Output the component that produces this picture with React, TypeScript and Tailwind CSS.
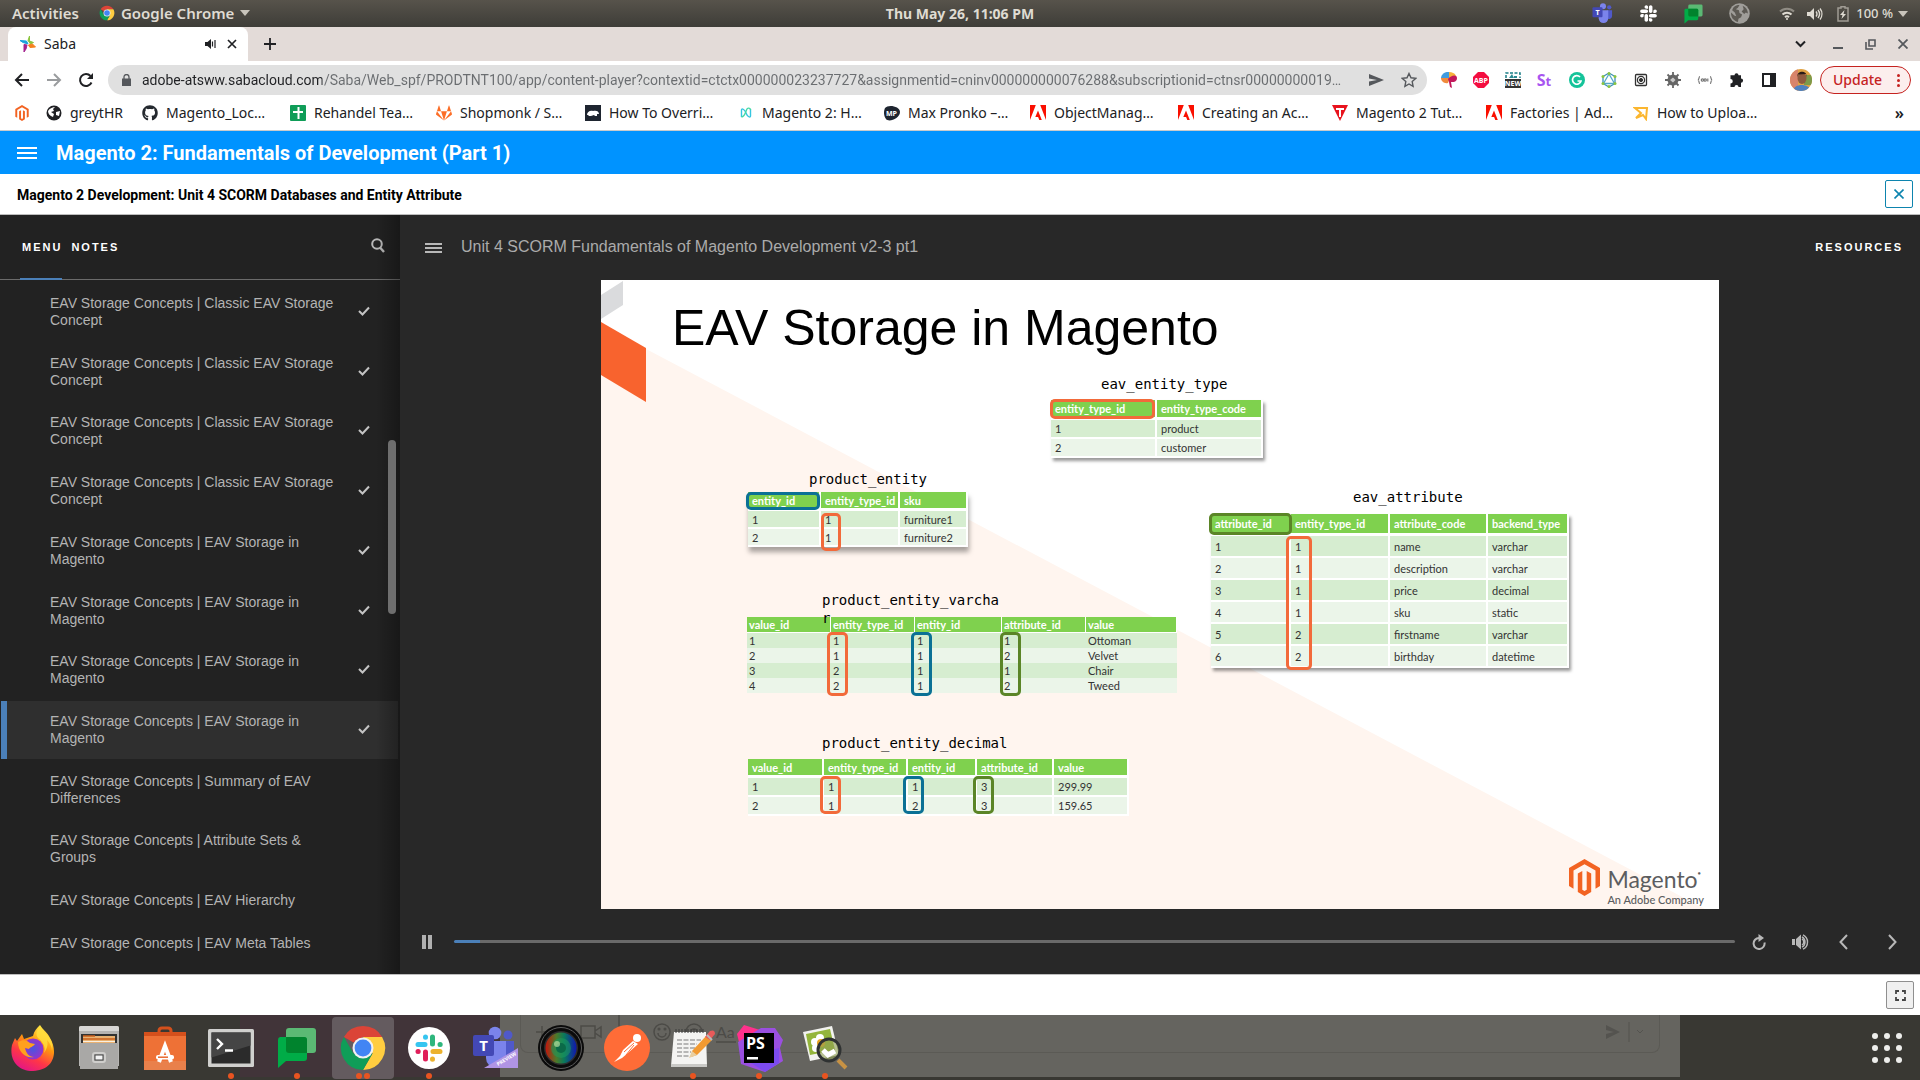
import type { ReactNode } from 'react';
import { FaGithub, FaGitlab, FaSlack } from 'react-icons/fa';

/* ---------- shared drawings ---------- */

function MagentoMark({ className }: { className: string }) {
  return (
    <svg viewBox="0 0 31 37" className={className} fill="#f26322" aria-hidden="true">
      <path d="M15.5 0 31 9v18l-4.5 2.7V11.6L15.5 5.200 4.500 11.600V29.700L0 27V9Z" />
      <path d="m13.300 12-4.500 2.600V33l6.700 4 6.700-4V14.600L17.700 12v18.800l-2.200 1.300-2.200-1.300Z" />
    </svg>
  );
}

function ChromeMark({ className }: { className: string }) {
  return (
    <svg viewBox="0 0 48 48" className={className} aria-hidden="true">
      <path d="M24 2A22 22 0 0 1 43.100 13H24L14.500 18.500 4.900 13A22 22 0 0 1 24 2Z" fill="#db4437" />
      <path d="M43.100 13A22 22 0 0 1 24 46L33.500 29.500 24 13Z" fill="#ffcd40" />
      <path d="M4.900 13A22 22 0 0 0 24 46L33.500 29.500H14.500Z" fill="#0f9d58" />
      <circle cx="24" cy="24" r="10.500" fill="#f1f1f1" />
      <circle cx="24" cy="24" r="8.400" fill="#4285f4" />
    </svg>
  );
}

function ChatMark({ className }: { className: string }) {
  return (
    <svg viewBox="0 0 40 42" className={className} aria-hidden="true">
      <rect x="9" y="1" width="30" height="25" rx="3" fill="#5bb974" />
      <path d="M3 10h24a3 3 0 0 1 3 3v18a3 3 0 0 1-3 3H9l-8 7V13a3 3 0 0 1 2-3Z" fill="#00ac47" />
      <path d="M9 10h18a3 3 0 0 1 3 3v13H12a3 3 0 0 1-3-3Z" fill="#00832d" />
    </svg>
  );
}

function TeamsMark({ className, preview }: { className: string; preview?: boolean }) {
  return (
    <svg viewBox="0 0 46 44" className={className} aria-hidden="true">
      <circle cx="36" cy="9" r="4.500" fill="#5059c9" />
      <path d="M32 15h10v13a6 6 0 0 1-10 4Z" fill="#5059c9" />
      <circle cx="23" cy="7" r="6.300" fill="#7b83eb" />
      <path d="M14 15h20v17a10 10 0 0 1-20 0Z" fill="#7b83eb" />
      <rect x="1" y="9" width="21" height="21" rx="2" fill="#4348b5" />
      <text x="11.500" y="25" textAnchor="middle" fontFamily="Open Sans, sans-serif" fontWeight="700" fontSize="15" fill="#fff">T</text>
      {preview && (
        <g>
          <path d="M46 22v20H12Z" fill="#b094e4" />
          <text x="26" y="40" transform="rotate(-31 26 40)" fontFamily="Open Sans, sans-serif" fontWeight="700" fontSize="5" fill="#fff">PREVIEW</text>
        </g>
      )}
    </svg>
  );
}

function Globe({ className }: { className: string }) {
  return (
    <svg viewBox="0 0 20 20" className={className} aria-hidden="true">
      <circle cx="10" cy="10" r="9.800" fill="#9f9d99" />
      <path d="M4 4.500C6 2.500 8 2 10 2L8.500 4.500 6.500 6l3 1 .5 2.500 2.500 1.500-1 2.500L9 15l-.5 3C4 17 1.500 13 2 9l3 3 2 .5L5.500 9 3 7Zm9-2c3 1.300 5 4 5 7.500l-2-1-1.500 1.500L12 8l2-2Z" fill="#5d5a54" />
    </svg>
  );
}

function AdobeMark() {
  return (
    <svg viewBox="0 0 16 16" className="size-4 shrink-0" aria-hidden="true">
      <path d="M0 0h5.800L0 15ZM10.200 0H16v15ZM8 5.500 11.800 15H9.300l-1.200-3H5.300Z" fill="#fa0f00" />
    </svg>
  );
}

/* ---------- desktop top bar ---------- */

function TopBar() {
  return (
    <header className="grid h-[27px] grid-cols-[1fr_auto_1fr] items-center bg-linear-to-b from-[#57534b] to-[#3e3d38] px-3 text-sm text-[#dfdbd2]">
      <div className="flex items-center gap-5 text-[15px] font-semibold">
        <button>Activities</button>
        <button className="flex items-center gap-[6px]">
          <ChromeMark className="size-4" />
          Google Chrome
          <svg viewBox="0 0 10 6" className="h-[6px] w-[10px]" aria-hidden="true"><path d="M0 0h10L5 6Z" fill="#c8c4bb" /></svg>
        </button>
      </div>
      <button className="font-bold">Thu May 26, 11:06 PM</button>
      <div className="flex items-center justify-end">
        <TeamsMark className="mr-[25px] h-[21px] w-[22px]" />
        <FaSlack className="mr-[25px] size-[19px] text-white" />
        <ChatMark className="mr-[25px] h-5 w-[21px]" />
        <Globe className="mr-[29px] size-[21px]" />
        <svg viewBox="0 0 16 14" className="mr-3 h-[14px] w-4" fill="none" stroke="#dfdbd2" strokeWidth="2" aria-hidden="true">
          <path d="M1 4.500a10 10 0 0 1 14 0" opacity=".45" />
          <path d="M3.500 7.500a6.500 6.500 0 0 1 9 0M6 10.200a3 3 0 0 1 4 0" />
          <circle cx="8" cy="12" r="1" fill="#dfdbd2" stroke="none" />
        </svg>
        <svg viewBox="0 0 16 14" className="mr-[14px] h-[14px] w-4" fill="none" stroke="#dfdbd2" strokeWidth="1.400" aria-hidden="true">
          <path d="M0 5h3l4-4v12L3 9H0Z" fill="#dfdbd2" stroke="none" />
          <path d="M9 4.500a4 4 0 0 1 0 5M11 3a6.500 6.500 0 0 1 0 8M13 1.500a9 9 0 0 1 0 11" />
        </svg>
        <svg viewBox="0 0 12 16" className="mr-[7px] h-4 w-3" fill="none" aria-hidden="true">
          <path d="M4 2V.8h4V2h3v13H1V2Z" stroke="#a09c94" strokeWidth="1.500" />
          <path d="M7.500 4 3 9h2.500L4.500 13 9 8H6.500Z" fill="#dfdbd2" />
        </svg>
        <span className="text-[13px] font-medium">100 %</span>
        <svg viewBox="0 0 10 6" className="ml-[5px] h-[6px] w-[10px]" aria-hidden="true"><path d="M0 0h10L5 6Z" fill="#c8c4bb" /></svg>
      </div>
    </header>
  );
}

/* ---------- browser chrome ---------- */

function TabStrip() {
  return (
    <div className="flex h-[34px] items-center bg-[#e3dbd8] pr-3 pl-2 text-[#202124]">
      <div className="flex h-full w-60 items-center rounded-t-lg bg-white pr-[11px] pl-3 text-sm">
        <svg viewBox="0 0 16 16" className="size-4" aria-hidden="true">
          <path d="M0 4.500 6.500 5 8 8 3 6.500Z" fill="#1ba3dd" stroke="#1ba3dd" />
          <path d="M9.500 0v5l4 1.500L10.500 8 8 4.500Z" fill="#8bc53f" stroke="#8bc53f" />
          <path d="m15.500 11-5.500.5-1.500-2.500 4-1Z" fill="#f58220" stroke="#f58220" />
          <path d="M4 16V8.500L7 9l-1 4Z" fill="#a3238e" stroke="#a3238e" />
        </svg>
        <span className="ml-2 flex-1">Saba</span>
        <svg viewBox="0 0 12 12" className="size-3" aria-hidden="true">
          <path d="M0 4h2.500L6 1v10L2.500 8H0Z" fill="#202124" />
          <path d="M7.500 3.500v5M10 2v8" stroke="#202124" strokeWidth="1.200" />
        </svg>
        <button aria-label="Close tab" className="ml-[10px]">
          <svg viewBox="0 0 10 10" className="size-[10px]" stroke="#202124" strokeWidth="1.700" aria-hidden="true"><path d="m1 1 8 8M9 1 1 9" /></svg>
        </button>
      </div>
      <button aria-label="New tab" className="ml-4">
        <svg viewBox="0 0 12 12" className="size-3" stroke="#202124" strokeWidth="1.800" aria-hidden="true"><path d="M6 0v12M0 6h12" /></svg>
      </button>
      <div className="ml-auto flex items-center gap-[22px] text-[#55585c]">
        <button aria-label="Search tabs" className="mr-[5px]">
          <svg viewBox="0 0 11 8" className="h-2 w-[11px]" fill="none" stroke="#202124" strokeWidth="2" aria-hidden="true"><path d="m1 1.500 4.500 4.500L10 1.500" /></svg>
        </button>
        <button aria-label="Minimise" className="pt-2"><span className="block h-[2px] w-[10px] bg-[#55585c]" /></button>
        <button aria-label="Restore">
          <svg viewBox="0 0 11 11" className="size-[11px]" fill="none" stroke="currentColor" strokeWidth="1.600" aria-hidden="true"><path d="M4 1h6v6H4ZM1 3v7h7" /></svg>
        </button>
        <button aria-label="Close window">
          <svg viewBox="0 0 10 10" className="size-[10px]" stroke="currentColor" strokeWidth="1.800" aria-hidden="true"><path d="m.5.5 9 9M9.500.5l-9 9" /></svg>
        </button>
      </div>
    </div>
  );
}

const extensions: { name: string; icon: ReactNode }[] = [
  { name: 'Colour picker', icon: <g><path d="M0 6a7 6 0 0 1 8-6v6Z" fill="#3f9be0" /><path d="M8 0c3 0 6 1 7 4l-7 3Z" fill="#f6b13c" /><path d="M0 6h9l-2 5C3 12 0 9 0 6Z" fill="#f08a3c" /><path d="M7 7c3-4 9-5 9-1 0 5-6 4-6 4l1 6-2-1-1-5Z" fill="#c2185b" /></g> },
  { name: 'Adblock Plus', icon: <g><path d="M5 0h6l5 5v6l-5 5H5l-5-5V5Z" fill="#f40d40" /><text x="8" y="10.800" textAnchor="middle" fontSize="7" fontWeight="700" fontFamily="Open Sans, sans-serif" fill="#fff">ABP</text></g> },
  { name: 'Screenshot', icon: <g><path d="M1 6V1h14v5" fill="none" stroke="#1a7d86" strokeWidth="1.500" strokeDasharray="3 1.500" /><path d="M4 6 7 2l2 4Zm5-2h3v2H9Z" fill="#2a8b93" /><rect y="7" width="16" height="9" fill="#333" /><text x="8" y="14.200" textAnchor="middle" fontSize="7" fontWeight="700" fontFamily="Open Sans, sans-serif" fill="#fff">NEW</text></g> },
  { name: 'Stylus', icon: <text x="7" y="14" textAnchor="middle" fontSize="16" fontWeight="700" fontFamily="Open Sans, sans-serif" fill="#a855f0">S<tspan fontSize="13">t</tspan></text> },
  { name: 'Grammarly', icon: <g><circle cx="8" cy="8" r="8" fill="#15c39a" /><path d="M11 5a4.300 4.300 0 1 0 1 4H8.500" fill="none" stroke="#fff" strokeWidth="1.700" /></g> },
  { name: 'GraphQL', icon: <g fill="none" strokeWidth="1.300"><path d="m8 1 6 3.500v7L8 15l-6-3.500v-7Z" stroke="#3d8fb8" /><path d="m8 2 5.500 9.500h-11Z" stroke="#55a9c9" /><g fill="#8cc63f" stroke="none"><circle cx="8" cy="1.500" r="1.500" /><circle cx="14" cy="4.500" r="1.500" /><circle cx="14" cy="11.500" r="1.500" /><circle cx="2" cy="11.500" r="1.500" /><circle cx="2" cy="4.500" r="1.500" /><circle cx="8" cy="14.500" r="1.500" /></g></g> },
  { name: 'Recorder', icon: <g fill="none" stroke="#333"><rect x="2.500" y="2.500" width="11" height="11" rx="1" strokeWidth="1.300" /><circle cx="8" cy="8" r="3.600" strokeWidth="1.300" /><circle cx="8" cy="8" r="1.600" fill="#333" /></g> },
  { name: 'Debugger', icon: <g><circle cx="8" cy="8" r="5.500" fill="#666" /><path d="M8 0v16M0 8h16M2.500 2.500l11 11M13.500 2.500l-11 11" stroke="#666" strokeWidth="1.800" /><path d="m5 8 3-2.500L10.500 8 8 10.500Z" fill="#c9c9c9" /></g> },
  { name: 'JSON viewer', icon: <g fill="none" stroke="#777" strokeWidth="1.200"><path d="M3 4.500C1.500 4.500 2.500 8 .8 8c1.700 0 .7 3.500 2.200 3.500M13 4.500c1.500 0 .5 3.500 2.200 3.500-1.700 0-.7 3.500-2.200 3.500" /><circle cx="5.500" cy="8" r="1.200" /><circle cx="8.200" cy="8" r="1.200" /><path d="M10.800 6.500v3" /></g> },
  { name: 'Extensions', icon: <path d="M5.500 3.200a2 2 0 0 1 4 0H12V6.500a2 2 0 0 1 0 4.200V15H9.500a2 2 0 0 0-4 0H1.500v-3.500a2 2 0 0 0 0-4.500V3.200ZM12 6.700a2 2 0 1 1 0 4Z" fill="#202124" /> },
  { name: 'Side panel', icon: <path d="M1 1h14v14H1Zm2 2v10h6V3Z" fillRule="evenodd" fill="#202124" /> },
];

const pageUrl =
  'adobe-atsww.sabacloud.com/Saba/Web_spf/PRODTNT100/app/content-player?contextid=ctctx000000023237727&assignmentid=cninv000000000076288&subscriptionid=ctnsr00000000019…';

function Toolbar() {
  return (
    <div className="flex h-[38px] items-center bg-white pr-[9px] pl-[14px]">
      <div className="flex w-[94px] items-center gap-4">
        <button aria-label="Back"><svg viewBox="0 0 16 14" className="h-[14px] w-4" fill="none" stroke="#202124" strokeWidth="2" aria-hidden="true"><path d="M15 7H2M8 1 2 7l6 6" /></svg></button>
        <button aria-label="Forward"><svg viewBox="0 0 16 14" className="h-[14px] w-4" fill="none" stroke="#9a9c9e" strokeWidth="2" aria-hidden="true"><path d="M1 7h13M8 1l6 6-6 6" /></svg></button>
        <button aria-label="Reload"><svg viewBox="0 0 16 16" className="size-4" fill="none" stroke="#202124" strokeWidth="2" aria-hidden="true"><path d="M13.500 10.500A6 6 0 1 1 12.500 4" /><path d="M15 1v6H9Z" fill="#202124" stroke="none" /></svg></button>
      </div>
      <label className="flex h-[30px] min-w-0 flex-1 items-center rounded-full bg-[#e0e0e0] pr-[10px] pl-[14px]">
        <svg viewBox="0 0 9 12" className="h-3 w-[9px] shrink-0" aria-hidden="true"><path d="M0 4.500h9V12H0Z" fill="#55585c" /><path d="M2 5V3a2.500 2.500 0 0 1 5 0v2" fill="none" stroke="#55585c" strokeWidth="1.300" /></svg>
        <span className="sr-only">Address</span>
        <input
          type="text"
          defaultValue={pageUrl}
          className="ml-[11px] min-w-0 flex-1 bg-linear-to-r from-[#202124] from-[180px] to-[#6a6d70] to-[180px] bg-clip-text font-[Roboto,sans-serif] text-sm text-transparent outline-none"
        />
        <button aria-label="Send" className="ml-3"><svg viewBox="0 0 15 12" className="h-3 w-[15px]" aria-hidden="true"><path d="M0 0l15 6L0 12V7.500L8 6 0 4.500Z" fill="#55585c" /></svg></button>
        <button aria-label="Bookmark" className="ml-[17px]"><svg viewBox="0 0 16 16" className="size-4" fill="none" stroke="#55585c" strokeWidth="1.400" aria-hidden="true"><path d="m8 1.500 2 4.300 4.700.6-3.500 3.200.9 4.700L8 12l-4.100 2.300.9-4.700L1.300 6.400 6 5.800Z" /></svg></button>
      </label>
      <div className="ml-[14px] flex items-center gap-4">
        {extensions.map((e) => (
          <button key={e.name} aria-label={e.name}><svg viewBox="0 0 16 16" className="size-4">{e.icon}</svg></button>
        ))}
      </div>
      <button aria-label="Profile" className="ml-[13px]">
        <svg viewBox="0 0 22 22" className="size-[22px]">
          <clipPath id="avatar"><circle cx="11" cy="11" r="11" /></clipPath>
          <g clipPath="url(#avatar)">
            <rect width="22" height="22" fill="#e0a243" />
            <path d="M0 0h8v22H0Z" fill="#d8846b" />
            <path d="M14 6h8v10h-8Z" fill="#7d9a4a" />
            <ellipse cx="12" cy="9" rx="4.500" ry="6" fill="#8f5a3f" />
            <path d="M7 8c0-7 10-7 10 0l-1-3-8 .5Z" fill="#2a1b18" />
            <path d="M3 22c1-8 16-8 18 0Z" fill="#4f81c0" />
          </g>
        </svg>
      </button>
      <button className="ml-2 flex h-7 w-[91px] items-center justify-between rounded-full border border-[#c5221f] bg-[#fceeed] pr-[10px] pl-3 text-sm font-medium text-[#c5221f]">
        Update
        <span className="flex flex-col gap-[2px]">
          <i className="size-[3px] rounded-full bg-[#c5221f]" /><i className="size-[3px] rounded-full bg-[#c5221f]" /><i className="size-[3px] rounded-full bg-[#c5221f]" />
        </span>
      </button>
    </div>
  );
}

const bookmarks: { width: string; label: string; icon: ReactNode }[] = [
  { width: 'w-8', label: '', icon: <MagentoMark className="h-4 w-4" /> },
  { width: 'w-24', label: 'greytHR', icon: <svg viewBox="0 0 16 16" className="size-4 shrink-0"><circle cx="8" cy="8" r="7.500" fill="#202124" /><path d="M2 6c2-3 5-4 7-4L7 4l1 2-3 1 3 2-1 3C4 11 2 9 2 6Zm8 1 4-1-1 5-3-1Z" fill="#fff" /></svg> },
  { width: 'w-[148px]', label: 'Magento_Loc…', icon: <FaGithub className="size-4 shrink-0 text-[#24292f]" /> },
  { width: 'w-[146px]', label: 'Rehandel Tea…', icon: <svg viewBox="0 0 16 16" className="size-4 shrink-0"><rect width="16" height="16" rx="1" fill="#0f9d58" /><path d="M8.500 2v12M3 7h10" stroke="#fff" strokeWidth="2" /></svg> },
  { width: 'w-[149px]', label: 'Shopmonk / S…', icon: <FaGitlab className="size-4 shrink-0 text-[#fc6d26]" /> },
  { width: 'w-[153px]', label: 'How To Overri…', icon: <svg viewBox="0 0 16 16" className="size-4 shrink-0"><rect width="16" height="16" fill="#1e2530" /><path d="M2 10c0-3 3-5 6-4 3-1 6 0 6 3h-2v2h-2l-1-1-3 1H4l-1-1Z" fill="#fff" /></svg> },
  { width: 'w-[146px]', label: 'Magento 2: H…', icon: <svg viewBox="0 0 16 16" className="size-4 shrink-0" fill="none" strokeWidth="1.400"><path d="M3.500 12V5c0-2 3-1 4.500 3s4.500 5 4.500 3V4" stroke="#35c6e0" /><path d="M3.500 12c2 0 4-4 5-7s4-2 4 0" stroke="#45d9a5" /></svg> },
  { width: 'w-[146px]', label: 'Max Pronko –…', icon: <svg viewBox="0 0 16 16" className="size-4 shrink-0"><path d="M1 3c3-4 15-2 15 4S5 18 2 14 0 5 1 3Z" fill="#1e2530" /><text x="7.500" y="10.500" textAnchor="middle" fontSize="7" fontWeight="700" fontFamily="Open Sans, sans-serif" fill="#fff">MP</text></svg> },
  { width: 'w-[148px]', label: 'ObjectManag…', icon: <AdobeMark /> },
  { width: 'w-[154px]', label: 'Creating an Ac…', icon: <AdobeMark /> },
  { width: 'w-[154px]', label: 'Magento 2 Tut…', icon: <svg viewBox="0 0 16 16" className="size-4 shrink-0"><path d="M0 0h16L8 16Z" fill="#e8131d" /><path d="M4 4h8M8 4v8" stroke="#fff" strokeWidth="2" /></svg> },
  { width: 'w-[147px]', label: 'Factories | Ad…', icon: <AdobeMark /> },
  { width: 'w-[150px]', label: 'How to Uploa…', icon: <svg viewBox="0 0 16 16" className="size-4 shrink-0" fill="none" stroke="#fbb62f" strokeWidth="2"><path d="M2 3h12l-1 11-3-4-7 3 5-5Z" /></svg> },
];

function BookmarkBar() {
  return (
    <nav aria-label="Bookmarks" className="flex h-8 items-center overflow-hidden border-b border-[#c9cbcd] bg-white pr-4 pb-[3px] pl-[14px] text-sm text-[#202124]">
      {bookmarks.map((b, i) => (
        <a key={i} href="#" aria-label={b.label || 'Magento'} className={`flex shrink-0 items-center gap-2 whitespace-nowrap ${b.width}`}>
          {b.icon}
          {b.label}
        </a>
      ))}
      <button className="ml-auto text-base leading-none font-semibold" aria-label="More bookmarks">»</button>
    </nav>
  );
}

/* ---------- course page ---------- */

const classic = 'EAV Storage Concepts | Classic EAV Storage Concept';
const inMagento = 'EAV Storage Concepts | EAV Storage in Magento';

const lessons: { title: string; done?: boolean; active?: boolean }[] = [
  { title: classic, done: true },
  { title: classic, done: true },
  { title: classic, done: true },
  { title: classic, done: true },
  { title: inMagento, done: true },
  { title: inMagento, done: true },
  { title: inMagento, done: true },
  { title: inMagento, done: true, active: true },
  { title: 'EAV Storage Concepts | Summary of EAV Differences' },
  { title: 'EAV Storage Concepts | Attribute Sets & Groups' },
  { title: 'EAV Storage Concepts | EAV Hierarchy' },
  { title: 'EAV Storage Concepts | EAV Meta Tables' },
];

function Sidebar() {
  return (
    <aside className="relative flex w-[400px] shrink-0 flex-col bg-[#222]">
      <div className="flex h-[65px] items-center border-b border-[#6b6b6b] pr-[15px] pl-5 text-white">
        <button className="relative flex h-full items-center pl-[2px] text-[11px] font-bold tracking-[2px]">
          MENU
          <span className="absolute inset-x-0 -bottom-px h-[2px] bg-[#4b80b9]" />
        </button>
        <button className="ml-[9px] text-[11px] font-bold tracking-[2px]">NOTES</button>
        <button aria-label="Search" className="mb-1 ml-auto">
          <svg viewBox="0 0 14 15" className="h-[15px] w-[14px]" fill="none" stroke="#b8b8b8" strokeWidth="2" aria-hidden="true"><circle cx="6" cy="6" r="4.800" /><path d="m9 9.500 4 4.500" strokeWidth="2.400" /></svg>
        </button>
      </div>
      <ul className="flex flex-1 flex-col justify-between pt-[3px] pb-[10px] text-sm leading-[17px] text-[#b4b4b4]">
        {lessons.map((l, i) => (
          <li key={i} className={l.active ? 'mr-[2px] ml-px bg-[#2f2f2f]' : 'mr-[2px] ml-px'}>
            <a href="#" aria-current={l.active} className={l.active ? 'flex items-center border-l-[6px] border-[#4b80b9] py-3 pr-7 pl-[43px]' : 'flex items-center py-3 pr-7 pl-[49px]'}>
              <span className="w-[290px]">{l.title}</span>
              {l.done && (
                <svg viewBox="0 0 12 10" className="mb-[2px] ml-auto h-[10px] w-3" fill="none" stroke="#c4c4c4" strokeWidth="2" aria-label="Completed"><path d="m1 5 3.500 3.500L11 1.500" /></svg>
              )}
            </a>
          </li>
        ))}
      </ul>
      <div className="pointer-events-none absolute inset-y-0 right-0 w-6 bg-linear-to-r from-transparent to-black/30" />
      <div className="absolute top-[225px] right-1 h-[174px] w-2 rounded-full bg-[#6e6e6e]" />
    </aside>
  );
}

/* ---------- slide ---------- */

type SheetProps = {
  name: string;
  place: string;
  headRow: string;
  headCell: string;
  bodyRow: string;
  bodyCell: string;
  cols: string[];
  head: string[];
  rows: string[][];
};

function Sheet({ name, place, headRow, headCell, bodyRow, bodyCell, cols, head, rows }: SheetProps) {
  return (
    <table aria-label={name} className={`absolute table-fixed border-separate border-spacing-0 text-left font-[Lato,sans-serif] leading-none ${place}`}>
      <colgroup>{cols.map((c, i) => <col key={i} className={c} />)}</colgroup>
      <thead className="text-[11px]">
        <tr className={headRow}>
          {head.map((h) => <th key={h} className={`border-white bg-[#7fd14e] bg-clip-padding py-0 pr-0 font-bold whitespace-nowrap text-white ${headCell}`}>{h}</th>)}
        </tr>
      </thead>
      <tbody className="text-[11px] text-[#333]">
        {rows.map((r, i) => (
          <tr key={i} className={`${bodyRow} ${i % 2 ? 'bg-[#ebf5e9]' : 'bg-[#d6edd0]'}`}>
            {r.map((c, j) => <td key={j} className={`border-white py-0 pr-0 ${bodyCell}`}>{c}</td>)}
          </tr>
        ))}
      </tbody>
    </table>
  );
}

const boxes = [
  'top-[119px] left-[449px] h-5 w-[105px] border-[#f26a3a]',
  'top-[212px] left-[145px] h-[18px] w-[74px] border-[#0b7195]',
  'top-[233px] left-[220px] h-[38px] w-5 border-[#f26a3a]',
  'top-[233px] left-[608px] h-[22px] w-[83px] border-[#5b8527]',
  'top-[256px] left-[685px] h-[134px] w-[26px] border-[#f26a3a]',
  'top-[352px] left-[226px] h-16 w-[21px] border-[#f26a3a]',
  'top-[352px] left-[310px] h-16 w-[21px] border-[#0b7195]',
  'top-[352px] left-[399px] h-16 w-[21px] border-[#5b8527]',
  'top-[496px] left-[219px] h-[38px] w-[21px] border-[#f26a3a]',
  'top-[496px] left-[302px] h-[38px] w-[21px] border-[#0b7195]',
  'top-[496px] left-[372px] h-[38px] w-[21px] border-[#5b8527]',
];

const captions = [
  { text: 'eav_entity_type', place: 'top-[95px] left-[500px]' },
  { text: 'product_entity', place: 'top-[190px] left-[208px]' },
  { text: 'eav_attribute', place: 'top-[208px] left-[752px]' },
  { text: 'product_entity_varchar', place: 'top-[311px] left-[221px] w-[184px] break-all' },
  { text: 'product_entity_decimal', place: 'top-[454px] left-[221px]' },
];

function Slide() {
  return (
    <section aria-label="Slide" className="relative h-[629px] w-[1118px] shrink-0 self-center overflow-hidden bg-white text-black">
      <svg viewBox="0 0 1118 629" className="absolute inset-0 size-full" aria-hidden="true">
        <path d="M0 45 47 70 1104 629H0Z" fill="#fff5ef" />
        <path d="M0 15 22 1v24L0 39Z" fill="#dadbdd" />
        <path d="m0 42 45 26v54L0 95Z" fill="#f8632e" />
      </svg>
      <h1 className="absolute top-5 left-[71px] text-[50px] leading-[56px] whitespace-nowrap">EAV Storage in Magento</h1>

      <Sheet
        name="eav_entity_type" place="top-[120px] left-[450px] w-[212px] shadow-[2px_3px_3px_#00000066]"
        headRow="h-5" headCell="border-r-2 border-b-[3px] pl-1" bodyRow="h-[19px]" bodyCell="border-r-2 border-b-2 pl-1"
        cols={['w-[106px]', 'w-[106px]']} head={['entity_type_id', 'entity_type_code']}
        rows={[['1', 'product'], ['2', 'customer']]}
      />
      <Sheet
        name="product_entity" place="top-[212px] left-[147px] w-[220px] shadow-[1px_5px_5px_#00000059]"
        headRow="h-[19px]" headCell="border-r-2 border-b-[3px] pl-1" bodyRow="h-[18px]" bodyCell="border-r-2 border-b-2 pl-1"
        cols={['w-[73px]', 'w-[79px]', 'w-[68px]']} head={['entity_id', 'entity_type_id', 'sku']}
        rows={[['1', '1', 'furniture1'], ['2', '1', 'furniture2']]}
      />
      <Sheet
        name="eav_attribute" place="top-[234px] left-[610px] w-[358px] shadow-[2px_3px_3px_#00000066]"
        headRow="h-[22px]" headCell="border-r-2 border-b-[3px] pl-1" bodyRow="h-[22px]" bodyCell="border-r-2 border-b-2 pl-1"
        cols={['w-[80px]', 'w-[99px]', 'w-[98px]', 'w-[81px]']} head={['attribute_id', 'entity_type_id', 'attribute_code', 'backend_type']}
        rows={[
          ['1', '1', 'name', 'varchar'],
          ['2', '1', 'description', 'varchar'],
          ['3', '1', 'price', 'decimal'],
          ['4', '1', 'sku', 'static'],
          ['5', '2', 'firstname', 'varchar'],
          ['6', '2', 'birthday', 'datetime'],
        ]}
      />
      <Sheet
        name="product_entity_varchar" place="top-[337px] left-[146px] w-[430px]"
        headRow="h-4" headCell="border-r border-b pl-[2px]" bodyRow="h-[15px]" bodyCell="pl-[2px]"
        cols={['w-[84px]', 'w-[84px]', 'w-[87px]', 'w-[84px]', 'w-[91px]']} head={['value_id', 'entity_type_id', 'entity_id', 'attribute_id', 'value']}
        rows={[['1', '1', '1', '1', 'Ottoman'], ['2', '1', '1', '2', 'Velvet'], ['3', '2', '1', '1', 'Chair'], ['4', '2', '1', '2', 'Tweed']]}
      />
      <Sheet
        name="product_entity_decimal" place="top-[479px] left-[147px] w-[381px]"
        headRow="h-[19px]" headCell="border-r-2 border-b-[3px] pl-1" bodyRow="h-[19px]" bodyCell="border-r-2 border-b-2 pl-1"
        cols={['w-[76px]', 'w-[84px]', 'w-[69px]', 'w-[77px]', 'w-[75px]']} head={['value_id', 'entity_type_id', 'entity_id', 'attribute_id', 'value']}
        rows={[['1', '1', '1', '3', '299.99'], ['2', '1', '2', '3', '159.65']]}
      />

      {captions.map((c) => (
        <p key={c.text} className={`absolute font-['DejaVu_Sans_Mono',monospace] text-sm leading-[18px] ${c.place}`}>{c.text}</p>
      ))}
      {boxes.map((b) => <span key={b} className={`absolute rounded-[5px] border-[3px] ${b}`} />)}

      <div className="absolute right-[15px] bottom-1 flex items-start gap-[7px] text-[#5c5d60]">
        <MagentoMark className="h-[37px] w-[31px]" />
        <div className="font-[Lato,sans-serif]">
          <p className="flex pt-1 text-[23px] leading-8">Magento<span className="text-[5px] leading-5">●</span></p>
          <p className="text-[11px] leading-[10px] font-medium whitespace-nowrap">An Adobe Company</p>
        </div>
      </div>
    </section>
  );
}

function Player() {
  return (
    <main className="flex min-w-0 flex-1 flex-col bg-[#282828]">
      <div className="flex h-[65px] shrink-0 items-center pr-[17px] pl-[25px]">
        <button aria-label="Toggle menu" className="flex flex-col gap-[2px]">
          <i className="h-[2px] w-[17px] bg-[#b8b8b8]" /><i className="h-[2px] w-[17px] bg-[#b8b8b8]" /><i className="h-[2px] w-[17px] bg-[#b8b8b8]" />
        </button>
        <h2 className="mb-[2px] ml-[19px] text-base text-[#ababab]">Unit 4 SCORM Fundamentals of Magento Development v2-3 pt1</h2>
        <button className="ml-auto text-[11px] font-bold tracking-[2px] text-white">RESOURCES</button>
      </div>
      <Slide />
      <div className="flex min-h-16 flex-1 items-center pr-[23px] pl-[22px]">
        <button aria-label="Pause" className="flex gap-[2px]"><i className="h-[14px] w-1 bg-[#b0b0b0]" /><i className="h-[14px] w-1 bg-[#b0b0b0]" /></button>
        <input
          type="range" aria-label="Seek" min={0} max={100} defaultValue={2}
          className="ml-[22px] h-[3px] min-w-0 flex-1 appearance-none rounded-full bg-linear-to-r from-[#4b80b9] from-2% to-[#6a6a6a] to-2% [&::-webkit-slider-thumb]:size-0 [&::-webkit-slider-thumb]:appearance-none"
        />
        <button aria-label="Replay" className="ml-[17px]"><svg viewBox="0 0 14 16" className="h-4 w-[14px]" fill="none" stroke="#b8b8b8" strokeWidth="2" aria-hidden="true"><path d="M12.500 8.500A5.500 5.500 0 1 1 7 4" /><path d="M6.500 0v8L12 4Z" fill="#b8b8b8" stroke="none" /></svg></button>
        <button aria-label="Volume" className="ml-[26px]"><svg viewBox="0 0 17 16" className="h-4 w-[17px]" fill="none" stroke="#b8b8b8" strokeWidth="1.400" aria-hidden="true"><path d="M0 5h3v6H0ZM4 5l5-4.500v15L4 11Z" fill="#b8b8b8" stroke="none" /><path d="M10 5a3.500 3.500 0 0 1 0 6M10 2.800a6 6 0 0 1 0 10.400M11 .8a8 8 0 0 1 0 14.400" /></svg></button>
        <button aria-label="Previous" className="ml-[30px]"><svg viewBox="0 0 9 16" className="h-4 w-[9px]" fill="none" stroke="#b8b8b8" strokeWidth="2" aria-hidden="true"><path d="M8 1 1.500 8 8 15" /></svg></button>
        <button aria-label="Next" className="ml-10"><svg viewBox="0 0 9 16" className="h-4 w-[9px]" fill="none" stroke="#b8b8b8" strokeWidth="2" aria-hidden="true"><path d="m1 1 6.500 7L1 15" /></svg></button>
      </div>
    </main>
  );
}

/* ---------- dock ---------- */

const SlackColours = (
  <g>
    <circle cx="22" cy="22" r="21" fill="#fff" />
    <g strokeWidth="5" strokeLinecap="round">
      <path d="M11 18.500h7M18.500 11v.2" stroke="#36c5f0" />
      <path d="M25.500 11v7M33 18.500h.2" stroke="#2eb67d" />
      <path d="M26 25.500h7M25.500 33v.2" stroke="#ecb22e" />
      <path d="M18.500 26v7M11 25.500h.2" stroke="#e01e5a" />
    </g>
  </g>
);

const dockApps: { name: string; dots: number; active?: boolean; art: ReactNode }[] = [
  {
    name: 'Firefox', dots: 0,
    art: (
      <svg viewBox="0 0 44 46" className="h-[46px] w-11">
        <defs>
          <linearGradient id="ff" x1=".8" y1="0" x2=".3" y2="1"><stop offset="0" stopColor="#fff44f" /><stop offset=".4" stopColor="#ff980e" /><stop offset=".7" stopColor="#ff3647" /><stop offset="1" stopColor="#e31587" /></linearGradient>
          <radialGradient id="ffc"><stop offset="0" stopColor="#4a55e0" /><stop offset="1" stopColor="#9833c9" /></radialGradient>
        </defs>
        <path d="M29 0c3 5 8 8 10 13 8 13 5 32-17 33C6 46-2 34 1 20l3-7 2 3 5-7 2 5 9-3c1-5 4-8 7-11Z" fill="url(#ff)" />
        <circle cx="22" cy="24" r="10.500" fill="url(#ffc)" />
        <path d="M7 17c5-3 9-2 12 1l5 1c-2 3-5 3-6 5l-4-1c1 5 4 9 9 9-8 2-16-5-16-15Z" fill="#ffa01e" />
        <path d="M29 1c-3 4-5 8-2 12 5 4 8 9 6 15 4-6 4-9 3-13 3 3 5 7 5 11 2-10-3-14-7-18-3-3-4-4-5-7Z" fill="#ffe03e" opacity=".8" />
      </svg>
    ),
  },
  {
    name: 'Files', dots: 0,
    art: (
      <svg viewBox="0 0 42 44" className="h-11 w-[42px]">
        <path d="M1 2a2 2 0 0 1 2-2h36a2 2 0 0 1 2 2v38H1Z" fill="#b5b4b2" /><path d="M1 2a2 2 0 0 1 2-2h36a2 2 0 0 1 2 2v3H1Z" fill="#d8d7d5" />
        <path d="M3 8h36v9H3Z" fill="#333" /><path d="M5 10h32v7H5Z" fill="#e9b272" /><path d="M5 13h32M5 10h12" stroke="#c9601d" strokeWidth="1.500" /><path d="M5 15.500h32" stroke="#f7efe2" />
        <path d="M2 17h38v26H2Z" fill="#a9a8a6" /><rect x="15" y="27" width="12" height="9" rx="2" fill="none" stroke="#cfcecc" strokeWidth="2" /><rect x="17" y="29" width="8" height="5" fill="#f4f4f4" stroke="#444" />
      </svg>
    ),
  },
  {
    name: 'Software', dots: 0,
    art: (
      <svg viewBox="0 0 42 44" className="h-11 w-[42px]">
        <path d="M15 11V5q0-3 3-3h6q3 0 3 3v6" fill="none" stroke="#d5501c" strokeWidth="3" />
        <path d="M0 6h42v6H0Z" fill="#d5501c" /><path d="M0 10h42v34H0Z" fill="#ee7136" /><path d="M0 35h42v9H0Z" fill="#e9804b" />
        <path d="m15 36 6-16 6 16" fill="none" stroke="#fff" strokeWidth="4" /><rect x="12" y="29" width="18" height="4.500" rx="2" fill="#fff" /><path d="M14 31.200h10" stroke="#e9692f" strokeWidth="1.500" />
      </svg>
    ),
  },
  {
    name: 'Terminal', dots: 1,
    art: (
      <svg viewBox="0 0 46 38" className="h-[38px] w-[46px]">
        <rect width="46" height="38" rx="1.500" fill="#d0d0ce" /><rect x="3.500" y="3.500" width="39" height="31" fill="#2b2b2b" /><path d="M3.500 3.500h39v13l-39 12Z" fill="#454545" />
        <path d="m9 10 5 5-5 5M17 21.500h8" fill="none" stroke="#fff" strokeWidth="2.400" />
      </svg>
    ),
  },
  { name: 'Google Chat', dots: 1, art: <ChatMark className="h-[42px] w-10" /> },
  { name: 'Google Chrome', dots: 2, active: true, art: <ChromeMark className="size-12" /> },
  { name: 'Slack', dots: 1, art: <svg viewBox="0 0 44 44" className="size-11">{SlackColours}</svg> },
  { name: 'Teams', dots: 0, art: <TeamsMark className="h-11 w-[46px]" preview /> },
  {
    name: 'Camera', dots: 0,
    art: (
      <svg viewBox="0 0 46 46" className="size-[46px]">
        <defs><linearGradient id="lens"><stop offset="0" stopColor="#c4140c" /><stop offset=".35" stopColor="#4c7a2a" /><stop offset=".6" stopColor="#0a7a5a" /><stop offset="1" stopColor="#1016b0" /></linearGradient></defs>
        <circle cx="23" cy="23" r="23" fill="#0b0b0b" /><circle cx="23" cy="23" r="20.500" fill="none" stroke="#5c5c5c" /><circle cx="23" cy="23" r="17" fill="#2d2d2d" />
        <circle cx="23" cy="23" r="15.500" fill="url(#lens)" /><circle cx="23" cy="23" r="10" fill="#1c9a5e" opacity=".55" /><circle cx="23" cy="23" r="5" fill="#0b6a48" /><circle cx="19" cy="19" r="3" fill="#b5e0a0" opacity=".7" />
      </svg>
    ),
  },
  {
    name: 'Postman', dots: 0,
    art: (
      <svg viewBox="0 0 46 46" className="size-[46px]">
        <circle cx="23" cy="23" r="23" fill="#ff6c37" /><circle cx="33" cy="13" r="4" fill="#fff" />
        <path d="M29 16 19 25l-3 6-6 6 8-4 6-5 10-9Z" fill="#fff" /><path d="M30 18 20 27M22 30l8-10" stroke="#ff6c37" />
      </svg>
    ),
  },
  {
    name: 'Text Editor', dots: 1,
    art: (
      <svg viewBox="0 0 46 44" className="h-11 w-[46px]">
        <path d="M4 6h32l1 34H1Z" fill="#f4f4f2" /><path d="M1 38h36v3H1Z" fill="#c9c9c6" />
        <path d="M6 7V3m3 4V3m3 4V3m3 4V3m3 4V3m3 4V3m3 4V3m3 4V3m3 4V3m3 4V3" stroke="#3c3c3c" />
        <path d="M7 14h24M7 18h20M7 22h22M7 26h14M7 30h12" stroke="#a3a3a3" strokeWidth="1.300" strokeDasharray="5 1.500" />
        <path d="m22 25 15-16 5 5-15 15-6 2Z" fill="#f29a31" /><path d="m35 11 5-6q5-2 5 3l-5 6Z" fill="#e85a5a" /><path d="m37 9 5 5" stroke="#b9b9b9" strokeWidth="2" /><path d="m19 32 3-7 5 4Z" fill="#e9cfa0" />
      </svg>
    ),
  },
  {
    name: 'PhpStorm', dots: 1,
    art: (
      <svg viewBox="0 0 48 48" className="size-12">
        <path d="M2 10 9 1l16 5-2 14-17 6Z" fill="#ff318c" /><path d="M26 4h14l8 12-3 8 3 13-18 11L6 40 3 18Z" fill="#9a4fe0" /><path d="m8 34 22 14 14-9V24Z" fill="#7d4bf0" />
        <path d="M9 9h30v30H9Z" fill="#000" /><path d="M12 33h11v2.500H12Z" fill="#fff" />
        <text x="11" y="25" fontFamily="Open Sans, sans-serif" fontWeight="700" fontSize="16" fill="#fff">PS</text>
      </svg>
    ),
  },
  {
    name: 'Image Viewer', dots: 1,
    art: (
      <svg viewBox="0 0 46 46" className="size-[46px]">
        <path d="m1 7 29-6 7 29-29 6Z" fill="#f2f2ef" /><path d="m4 9 24-5 5 21-25 5Z" fill="#94b53b" />
        <g fill="#fff"><circle cx="13" cy="17" r="4" /><circle cx="18" cy="13" r="4" /><circle cx="14" cy="23" r="4" /></g><circle cx="19" cy="18" r="4" fill="#e9a522" />
        <circle cx="27" cy="25" r="11" fill="#8fa05499" stroke="#2f3232" strokeWidth="3" /><path d="m21 25 5 5 7-4" stroke="#fff" strokeWidth="5" fill="none" /><path d="m36 35 8 8" stroke="#c79244" strokeWidth="4" />
      </svg>
    ),
  },
];

function Dock() {
  return (
    <footer className="relative flex h-[65px] shrink-0 items-stretch bg-[#393833] pr-[18px]">
      <div className="absolute top-0 left-60 h-[62px] w-[260px] bg-[#413439]" />
      <div className="absolute top-0 right-60 left-[500px] h-[62px] bg-[#65645f]">
        <div className="mr-5 ml-5 h-[38px] rounded-b-lg border border-t-0 border-[#5b5a55]">
          <svg viewBox="0 0 240 34" className="h-[34px] w-[240px]" fill="none" stroke="#4c4b47" strokeWidth="1.500" aria-hidden="true">
            <path d="M15 17h12M21 11v12M60 11h14v12H60Zm14 5 6-4v10l-6-4M98 0v30M195 27h20" /><circle cx="141" cy="17" r="8" /><path d="M137 18a4 4 0 0 0 8 0" /><circle cx="138" cy="14" r=".8" /><circle cx="144" cy="14" r=".8" /><circle cx="173" cy="17" r="8" /><circle cx="173" cy="17" r="3" />
            <text x="195" y="23" fontSize="16" fontFamily="Lato, sans-serif" fill="#4c4b47" stroke="none">Aa</text>
          </svg>
        </div>
        <svg viewBox="0 0 50 20" className="absolute top-[7px] right-6 h-5 w-[50px]" aria-hidden="true"><path d="m0 3 14 7L0 17v-5l8-2-8-2Z" fill="#54534f" /><path d="M23 0v20M31 8l3 3 3-3" stroke="#54534f" fill="none" /></svg>
      </div>
      <div className="relative flex">
        {dockApps.map((a) => (
          <button key={a.name} aria-label={a.name} className="relative flex w-[66px] items-center justify-center">
            {a.active && <span className="absolute inset-x-[2px] top-[2px] bottom-px rounded bg-[#645b5f]" />}
            <span className="relative">{a.art}</span>
            <span className="absolute inset-x-0 bottom-px flex justify-center gap-[2px]">
              {Array.from({ length: a.dots }, (_, i) => <i key={i} className="size-[6px] rounded-full bg-[#e95420]" />)}
            </span>
          </button>
        ))}
      </div>
      <button aria-label="Show applications" className="relative my-auto ml-auto grid grid-cols-3 gap-[6px]">
        {Array.from({ length: 9 }, (_, i) => <i key={i} className="size-[6px] rounded-full bg-[#eeeeec]" />)}
      </button>
    </footer>
  );
}

export default function App() {
  return (
    <div className="flex min-h-screen flex-col bg-white font-['Liberation_Sans',Arial,sans-serif]">
      <div className="font-['Noto_Sans',sans-serif]">
        <TopBar />
        <TabStrip />
        <Toolbar />
        <BookmarkBar />
      </div>
      <div className="font-[Roboto,sans-serif]">
        <div className="flex h-[43px] items-center gap-[19px] bg-[#0093ff] px-[17px] text-white">
          <button aria-label="Navigation" className="flex flex-col gap-[3px]">
            <i className="h-[2px] w-5 bg-white" /><i className="h-[2px] w-5 bg-white" /><i className="h-[2px] w-5 bg-white" />
          </button>
          <h1 className="text-xl font-bold">Magento 2: Fundamentals of Development (Part 1)</h1>
        </div>
        <div className="flex h-[41px] items-center justify-between border-b border-[#bdbdbd] bg-white pr-[7px] pl-[17px]">
          <h2 className="pt-px text-sm font-bold text-black">Magento 2 Development: Unit 4 SCORM Databases and Entity Attribute</h2>
          <button aria-label="Close" className="flex size-7 items-center justify-center rounded-[2px] border border-[#0d84ae]">
            <svg viewBox="0 0 10 10" className="size-[10px]" stroke="#0d84ae" strokeWidth="1.600" aria-hidden="true"><path d="m.5.5 9 9M9.500.5l-9 9" /></svg>
          </button>
        </div>
      </div>
      <div className="flex flex-1 items-stretch">
        <Sidebar />
        <Player />
      </div>
      <div className="flex h-[41px] items-center justify-end border-t border-[#bdbdbd] pr-[6px]">
        <button aria-label="Full screen" className="flex size-7 items-center justify-center rounded-[2px] border border-[#8f8f8f] bg-[#f0f0f0]">
          <svg viewBox="0 0 11 11" className="size-[11px]" fill="none" stroke="#444" strokeWidth="1.800" aria-hidden="true"><path d="M1 4V1h3M7 1h3v3M10 7v3H7M4 10H1V7" /></svg>
        </button>
      </div>
      <Dock />
    </div>
  );
}
